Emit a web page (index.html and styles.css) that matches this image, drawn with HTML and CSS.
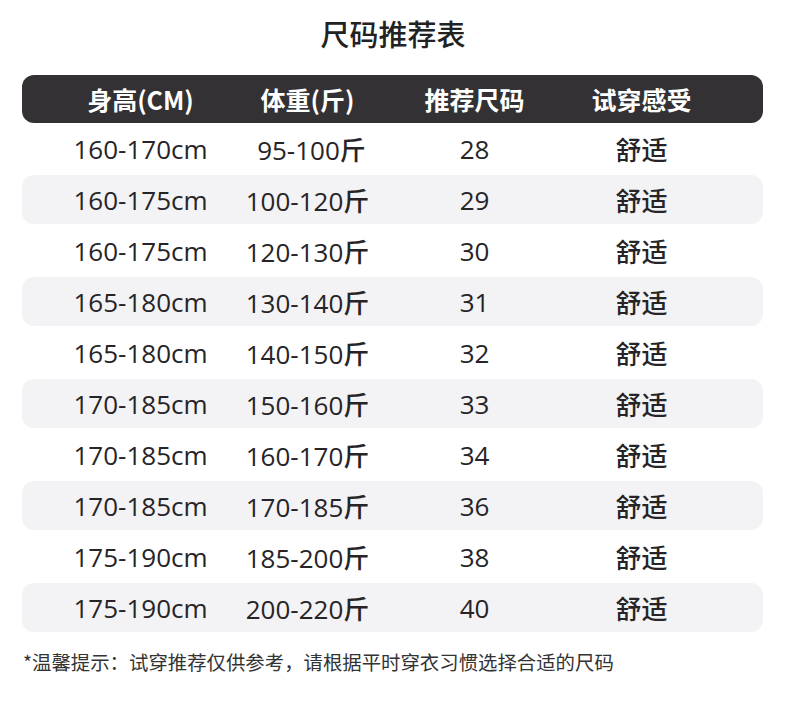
FILE: index.html
```html
<!DOCTYPE html>
<html lang="zh">
<head>
<meta charset="utf-8">
<title>尺码推荐表</title>
<link rel="stylesheet" href="styles.css">
</head>
<body>
<div class="page">
  <h1 class="title">尺码推荐表</h1>
  <div class="table">
    <div class="row head">
      <div>身高(CM)</div><div>体重(斤)</div><div>推荐尺码</div><div>试穿感受</div>
    </div>
    <div class="body">
      <div class="row"><div>160-170cm</div><div class="nudge">95-100斤</div><div>28</div><div class="feel">舒适</div></div>
      <div class="row alt"><div>160-175cm</div><div>100-120斤</div><div>29</div><div class="feel">舒适</div></div>
      <div class="row"><div>160-175cm</div><div>120-130斤</div><div>30</div><div class="feel">舒适</div></div>
      <div class="row alt"><div>165-180cm</div><div>130-140斤</div><div>31</div><div class="feel">舒适</div></div>
      <div class="row"><div>165-180cm</div><div>140-150斤</div><div>32</div><div class="feel">舒适</div></div>
      <div class="row alt"><div>170-185cm</div><div>150-160斤</div><div>33</div><div class="feel">舒适</div></div>
      <div class="row"><div>170-185cm</div><div>160-170斤</div><div>34</div><div class="feel">舒适</div></div>
      <div class="row alt"><div>170-185cm</div><div>170-185斤</div><div>36</div><div class="feel">舒适</div></div>
      <div class="row"><div>175-190cm</div><div>185-200斤</div><div>38</div><div class="feel">舒适</div></div>
      <div class="row alt"><div>175-190cm</div><div>200-220斤</div><div>40</div><div class="feel">舒适</div></div>
    </div>
  </div>
  <p class="note">*温馨提示：试穿推荐仅供参考，请根据平时穿衣习惯选择合适的尺码</p>
</div>
</body>
</html>
```
FILE: styles.css
```css
* { box-sizing: border-box; }
html, body { margin: 0; padding: 0; background: #ffffff; }
body {
  font-family: "Open Sans", "Noto Sans CJK SC", sans-serif;
  color: #262427;
  width: 790px;
  height: 702px;
  overflow: hidden;
}
.page { padding-top: 13px; }
.title {
  margin: 0;
  text-align: center;
  font-family: "Noto Sans CJK SC", sans-serif;
  font-size: 29px;
  font-weight: 500;
  line-height: 40px;
  color: #222;
  padding-right: 4px;
}
.table {
  width: 741px;
  margin: 22px 0 0 22px;
}
.row {
  display: grid;
  grid-template-columns: repeat(4, 1fr);
  padding: 0 38px 0 35px;
  align-items: center;
  text-align: center;
  height: 49px;
  border-radius: 12px;
  font-size: 26px;
  font-weight: 500;
}
.row > div { white-space: nowrap; }
.feel { font-weight: 500; }
.head {
  height: 48px;
  background: #333133;
  color: #ffffff;
  font-family: "Noto Sans CJK SC", sans-serif;
  font-size: 25px;
  font-weight: 700;
}
.body {
  display: flex;
  flex-direction: column;
  gap: 2px;
  padding-top: 1px;
}
.alt { background: #f3f2f4; }
.nudge { padding-left: 8px; }
.note {
  margin: 17px 0 0 23px;
  font-family: "Noto Sans CJK SC", sans-serif;
  font-size: 19.4px;
  color: #333;
  line-height: 26px;
}
```
